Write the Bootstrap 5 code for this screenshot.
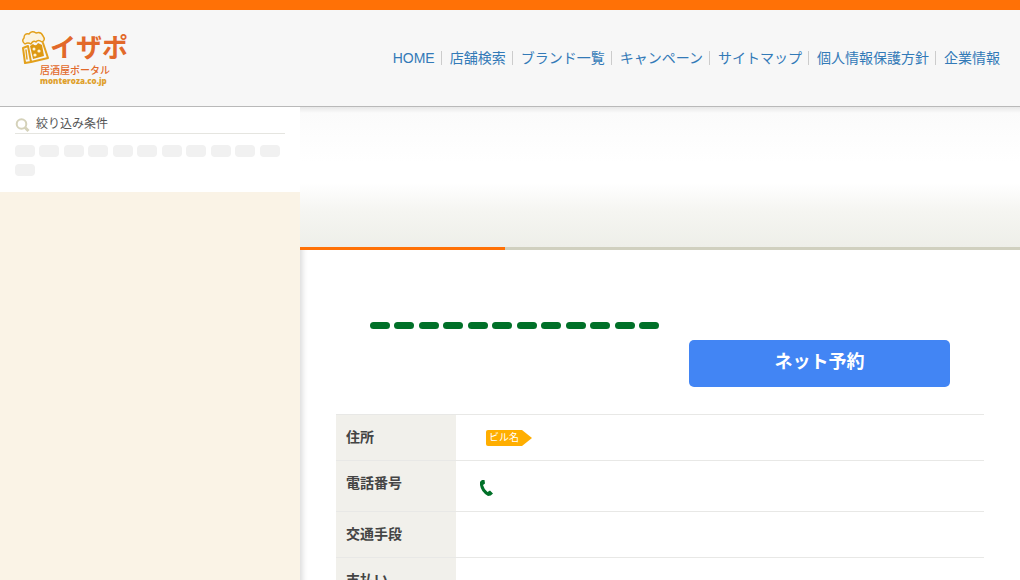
<!DOCTYPE html>
<html lang="ja">
<head>
<meta charset="utf-8">
<meta name="viewport" content="width=device-width, initial-scale=1">
<title>イザポ 居酒屋ポータル</title>
<link href="https://cdn.jsdelivr.net/npm/bootstrap@5.3.0/dist/css/bootstrap.min.css" rel="stylesheet">
<style>
  body { font-family: "Liberation Sans", "Noto Sans CJK JP", sans-serif; font-size: 14px; line-height: 20px; color: #444; }
  .site-header { background: #f7f7f7; border-top: 10px solid #ff7106; border-bottom: 1px solid #b9b9b9; height: 107px; padding: 0 20px; }
  .site-header a { color: #337ab7; text-decoration: none; }
  .site-nav li + li { margin-left: 6px; padding-left: 9px; background: linear-gradient(#ccc, #ccc) no-repeat left center / 1px 14px; }
  .side { width: 300px; background: #faf3e6; }
  .filter-box { background: #fff; padding: 9px 15px 14px; }
  .filter-title { font-size: 12px; line-height: 17px; border-bottom: 1px solid #e5e5e0; margin-bottom: 6px; color: #555; }
  .tag-list { font-size: 16px; line-height: 19px; }
  .tag { display: inline-block; width: 20px; height: 12px; border-radius: 4px; background: #f1f1f1; vertical-align: middle; }
  .tag-green { height: 7px; background: #007028; }
  .content { min-width: 0; box-shadow: inset 6px 0 6px -4px rgba(0,0,0,.16); }
  .hero { height: 143px; background: linear-gradient(#e8e8e8, #fbfbfb 6px, #fff 40%, #fff 54%, #f5f5f1 75%, #eeefe9); border-bottom: 3px solid #d0d0bf; }
  .hero-tab { width: 205px; margin-bottom: -3px; border-bottom: 3px solid #ff7106; }
  .shop { padding: 65px 36px 40px; }
  .shop-head { padding: 0 34px 27px; }
  .shop-head .tag-list { margin-bottom: 6px; }
  .reserve { width: 45%; height: 47px; padding: 0 0 3px; background: #4285f4; color: #fff; font-size: 18px; font-weight: 700; border: 0; border-radius: 5px; }
  .reserve:hover { background: #3275e4; color: #fff; }
  .shop-table { border-top: 1px solid #e8e8e6; }
  .shop-table tr { border-bottom: 1px solid #e8e8e6; height: 46px; }
  .shop-table tr.tel-row { height: 51px; }
  .shop-table th { width: 120px; background: #f1f0eb; padding: 12px 10px; vertical-align: top; }
  .shop-table td { padding: 15px 23px 12px; vertical-align: top; }
  .building { display: block; width: 46px; height: 16px; margin-left: 7px; padding-left: 3px; font-size: 10px; line-height: 16px; color: #fff; background: #ffae00; border-radius: 2px; clip-path: polygon(0 0, 36px 0, 100% 50%, 36px 100%, 0 100%); }
</style>
</head>
<body class="min-vh-100 d-flex flex-column">
<header class="site-header d-flex align-items-center justify-content-between">
  <a href="#" aria-label="イザポ">
    <svg class="d-block" width="116" height="60" viewBox="0 0 116 60">
      <g fill="none" stroke="#e3a01b" stroke-width="2" stroke-linejoin="round" stroke-linecap="round">
        <path fill="#fbf3e0" d="M5 16Q1 13 4 10Q4 5 9 6Q12 2 16 5Q21 3 23 8Q26 12 22 14Q18 11 16 14Q13 12 11 16Q8 14 5 16Z" stroke-width="1.500"/>
        <path d="M8 18L11 34L28 30L23 15M8 18L3 20L5 35L11 34"/>
        <path d="M6 22L7 31" stroke-width="1.500"/>
      </g>
      <path fill="#dd9812" d="M10 18L13 16Q16 19 18 15L22 17L24 28L13 31Z"/>
      <g fill="#fff3d4"><circle cx="14" cy="21" r="1.500"/><circle cx="19" cy="23" r="1.600"/><circle cx="15" cy="27" r="1.600"/></g>
      <g font-family="'Noto Sans CJK JP', sans-serif" fill="#e2692a">
        <text x="30" y="29" font-size="26" font-weight="700">イザポ</text>
        <text x="20" y="46" font-size="10" font-weight="500">居酒屋ポータル</text>
      </g>
      <text x="20" y="56" font-family="'Open Sans', sans-serif" font-size="8" font-weight="800" fill="#dfa02b">monteroza.co.jp</text>
    </svg>
  </a>
  <nav>
    <ul class="site-nav list-unstyled d-flex mb-0">
      <li><a href="#">HOME</a></li>
      <li><a href="#">店舗検索</a></li>
      <li><a href="#">ブランド一覧</a></li>
      <li><a href="#">キャンペーン</a></li>
      <li><a href="#">サイトマップ</a></li>
      <li><a href="#">個人情報保護方針</a></li>
      <li><a href="#">企業情報</a></li>
    </ul>
  </nav>
</header>
<div class="d-flex flex-grow-1">
  <aside class="side flex-shrink-0">
    <div class="filter-box">
      <h2 class="filter-title d-flex align-items-center gap-1 fw-normal">
        <svg width="17" height="16" viewBox="0 0 17 16" fill="none" stroke="#d5d2ba"><circle cx="6.500" cy="7" r="4.800" stroke-width="2"/><path d="M10 10.500L13.500 14" stroke-width="3"/></svg>
        絞り込み条件
      </h2>
      <div class="tag-list">
        <span class="tag"></span> <span class="tag"></span> <span class="tag"></span> <span class="tag"></span> <span class="tag"></span> <span class="tag"></span> <span class="tag"></span> <span class="tag"></span> <span class="tag"></span> <span class="tag"></span> <span class="tag"></span> <span class="tag"></span>
      </div>
    </div>
  </aside>
  <main class="content flex-grow-1">
    <div class="hero d-flex"><div class="hero-tab"></div></div>
    <section class="shop">
      <div class="shop-head">
        <div class="tag-list">
          <span class="tag tag-green"></span> <span class="tag tag-green"></span> <span class="tag tag-green"></span> <span class="tag tag-green"></span> <span class="tag tag-green"></span> <span class="tag tag-green"></span> <span class="tag tag-green"></span> <span class="tag tag-green"></span> <span class="tag tag-green"></span> <span class="tag tag-green"></span> <span class="tag tag-green"></span> <span class="tag tag-green"></span>
        </div>
        <div class="d-flex justify-content-end">
          <button type="button" class="btn reserve">ネット予約</button>
        </div>
      </div>
      <table class="shop-table w-100">
        <tbody>
          <tr><th scope="row">住所</th><td><span class="building">ビル名</span></td></tr>
          <tr class="tel-row"><th scope="row">電話番号</th><td>
            <svg class="d-block mt-1" width="16" height="18" viewBox="0 0 16 18" fill="#007028" aria-hidden="true"><path d="M1 2Q3 -1 5.500 0L6 3.500L4 5Q5 9 8.500 12L11 10.500L14 13.500Q12 16 9 16Q2 12 1 5Z"/></svg>
          </td></tr>
          <tr><th scope="row">交通手段</th><td></td></tr>
          <tr><th scope="row">支払い</th><td></td></tr>
        </tbody>
      </table>
    </section>
  </main>
</div>
<script src="https://cdn.jsdelivr.net/npm/bootstrap@5.3.0/dist/js/bootstrap.bundle.min.js"></script>
</body>
</html>
